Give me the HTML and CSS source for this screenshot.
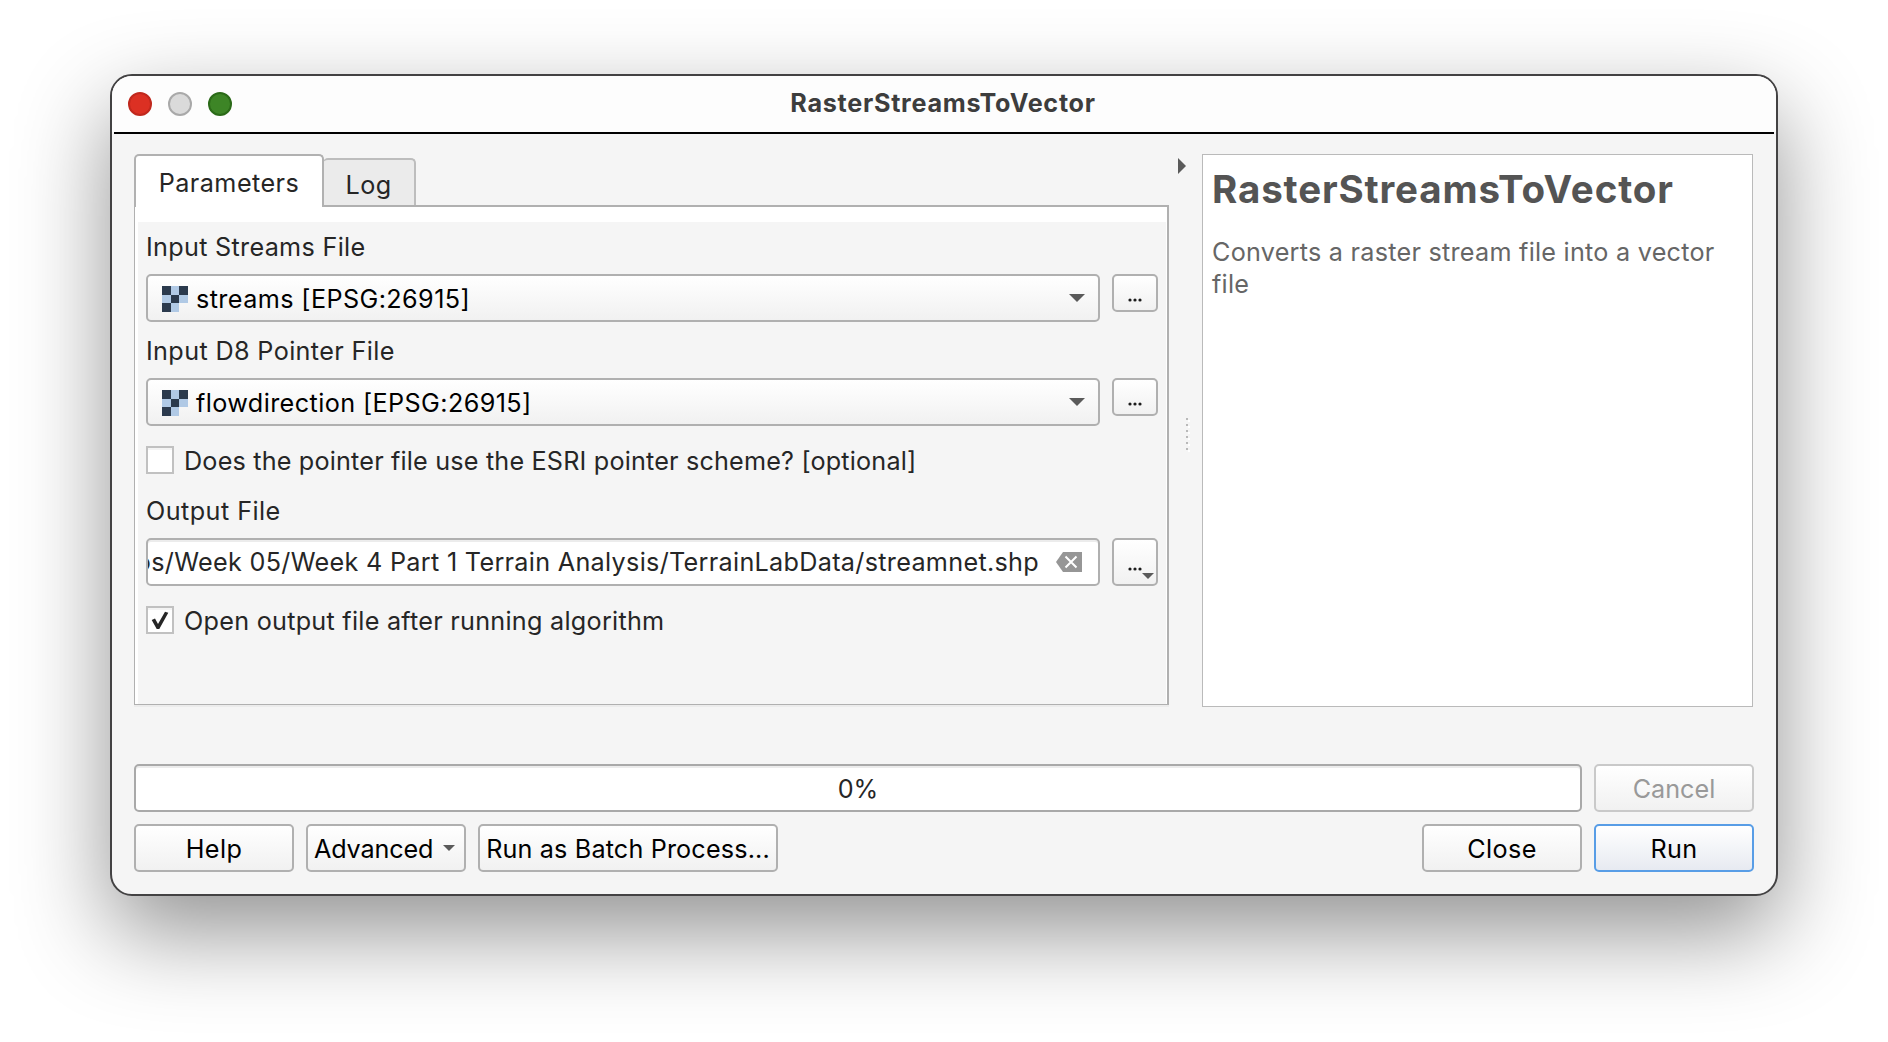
FILE: index.html
```
<!DOCTYPE html>
<html lang="en">
<head>
<meta charset="utf-8">
<title>RasterStreamsToVector</title>
<link rel="stylesheet" href="styles.css">
</head>
<body>
<div class="window">
  <header class="titlebar">
    <div class="lights"><i class="light light-close"></i><i class="light light-min"></i><i class="light light-max"></i></div>
    <h1 class="window-title">RasterStreamsToVector</h1>
  </header>
  <div class="divider"></div>

  <main class="content">
    <section class="left">
      <nav class="tabs">
        <div class="tab tab-active">Parameters</div>
        <div class="tab tab-log">Log</div>
      </nav>
      <div class="pane">
        <div class="form">
          <label class="label ls-30">Input Streams File</label>
          <div class="row">
            <div class="combo">
              <svg class="raster" viewBox="0 0 3 3" shape-rendering="crispEdges"><path fill="#b0c9e5" d="M0 0h3v2H2v1H0z"/><path fill="#2b3a4d" d="M0 0h1v1H0zM2 0h1v1H2zM1 1h1v1H1zM0 2h1v1H0z"/></svg>
              <span class="combo-text">streams [EPSG:26915]</span>
              <svg class="arrow" viewBox="0 0 16 8"><path d="M0 0h16L8 8z"/></svg>
            </div>
            <div class="more">
              <svg class="dots" viewBox="0 0 14 4"><circle cx="2" cy="2" r="1.6"/><circle cx="7" cy="2" r="1.6"/><circle cx="12" cy="2" r="1.6"/></svg>
            </div>
          </div>
          <label class="label label-second">Input D8 Pointer File</label>
          <div class="row">
            <div class="combo">
              <svg class="raster" viewBox="0 0 3 3" shape-rendering="crispEdges"><path fill="#b0c9e5" d="M0 0h3v2H2v1H0z"/><path fill="#2b3a4d" d="M0 0h1v1H0zM2 0h1v1H2zM1 1h1v1H1zM0 2h1v1H0z"/></svg>
              <span class="combo-text">flowdirection [EPSG:26915]</span>
              <svg class="arrow" viewBox="0 0 16 8"><path d="M0 0h16L8 8z"/></svg>
            </div>
            <div class="more">
              <svg class="dots" viewBox="0 0 14 4"><circle cx="2" cy="2" r="1.6"/><circle cx="7" cy="2" r="1.6"/><circle cx="12" cy="2" r="1.6"/></svg>
            </div>
          </div>
          <div class="check-row">
            <span class="checkbox"></span>
            <span class="check-text ls-18">Does the pointer file use the ESRI pointer scheme? [optional]</span>
          </div>
          <label class="label label-output">Output File</label>
          <div class="row">
            <div class="path-field">
              <div class="path-clip"><span class="path">os/Week 05/Week 4 Part 1 Terrain Analysis/TerrainLabData/streamnet.shp</span></div>
              <svg class="clear" viewBox="0 0 26 20"><path fill="#969696" d="M0 10 7 0h19v20H7z"/><path d="M9.5 4.500l11 11M20.500 4.500l-11 11" stroke="#fff" stroke-width="2" fill="none"/></svg>
            </div>
            <div class="more more-menu">
              <svg class="dots" viewBox="0 0 14 4"><circle cx="2" cy="2" r="1.6"/><circle cx="7" cy="2" r="1.6"/><circle cx="12" cy="2" r="1.6"/></svg>
              <svg class="menu-arrow" viewBox="0 0 12 6"><path d="M0 0h12L6 6z"/></svg>
            </div>
          </div>
          <div class="check-row">
            <span class="checkbox"><svg class="tick" viewBox="0 0 24 24"><path fill="#262626" d="M3.700 12 7 10.500l3 5.500L17 3.700l3.300 1L11.300 21H8.700z"/></svg></span>
            <span class="check-text ls-26">Open output file after running algorithm</span>
          </div>
        </div>
      </div>
    </section>

    <div class="splitter">
      <svg class="collapse" viewBox="0 0 8 16"><path d="M0 0 8 8 0 16z"/></svg>
      <svg class="grip" viewBox="0 0 4 34" shape-rendering="crispEdges"><path fill="#fff" d="M2 2h2v2H2zM2 8h2v2H2zM2 14h2v2H2zM2 20h2v2H2zM2 26h2v2H2zM2 32h2v2H2z"/><path fill="#b9b9b9" d="M0 0h2v2H0zM0 6h2v2H0zM0 12h2v2H0zM0 18h2v2H0zM0 24h2v2H0zM0 30h2v2H0z"/></svg>
    </div>

    <aside class="help-panel">
      <h2 class="help-title">RasterStreamsToVector</h2>
      <p class="help-text">Converts a raster stream file into a vector file</p>
    </aside>
  </main>

  <footer class="footer">
    <div class="footer-row">
      <div class="progress">0%</div>
      <button class="btn btn-cancel" disabled>Cancel</button>
    </div>
    <div class="footer-row">
      <button class="btn btn-help">Help</button>
      <button class="btn btn-advanced">Advanced<svg class="btn-arrow" viewBox="0 0 12 6"><path d="M0 0h12L6 6z"/></svg></button>
      <button class="btn btn-batch">Run as Batch Process...</button>
      <span class="spacer"></span>
      <button class="btn btn-close">Close</button>
      <button class="btn btn-run">Run</button>
    </div>
  </footer>
</div>
</body>
</html>
```
FILE: styles.css
```
* { box-sizing: border-box; }

body {
  margin: 0;
  padding: 74px 110px 0;
  height: 1042px;
  overflow: hidden;
  background: #fff;
  font-family: Inter, "Liberation Sans", sans-serif;
  font-size: 25.2px;
  line-height: 32px;
  color: #262626;
}

svg { display: block; flex: none; }

.window {
  width: 1668px;
  height: 822px;
  border: 2px solid #434243;
  border-radius: 22px;
  background: #f5f5f5;
  box-shadow: 0 36px 92px rgba(0, 0, 0, .43);
  overflow: hidden;
  display: flex;
  flex-direction: column;
}

.titlebar {
  flex: none;
  height: 56px;
  display: grid;
  grid-template-columns: 1fr auto 1fr;
  align-items: center;
  padding: 0 16px;
  background: #fdfdfd;
}
.lights { display: flex; gap: 16px; }
.light { width: 24px; height: 24px; border-radius: 50%; border: 2px solid; }
.light-close { background: #dc3023; border-color: #c0281d; }
.light-min { background: #dadada; border-color: #a9a9a9; }
.light-max { background: #3d8526; border-color: #2b6a18; }
.window-title { margin: 0 2px 2px 0; font-size: 25.2px; font-weight: 700; letter-spacing: .72px; color: #3d3d3d; }
.divider { flex: none; height: 2px; margin: 0 2px; background: #000; }

.content { flex: none; display: flex; height: 573px; padding: 20px 23px 0 22px; }
.left { width: 1035px; height: 551px; display: flex; flex-direction: column; }

.tabs { display: flex; align-items: flex-end; height: 51px; }
.tab { border: 2px solid #b1b1b1; border-bottom: 0; border-radius: 5px 5px 0 0; text-align: center; }
.tab-active {
  position: relative;
  z-index: 1;
  width: 190px;
  height: 53px;
  margin-bottom: -2px;
  padding-top: 11px;
  background: #fff;
  letter-spacing: .45px;
}
.tab-log {
  width: 93px;
  height: 47px;
  margin-left: -1px;
  padding-top: 9px;
  border-left-width: 0;
  border-color: #bdbdbd;
  background: #ebebeb;
  letter-spacing: .4px;
}

.pane {
  flex: 1;
  padding: 15px 1px 0 3px;
  border: solid #b0b0b0;
  border-width: 2px 2px 1px 1px;
  background: #fff;
  box-shadow: 0 2px 0 #ececec;
}
.form { height: 100%; padding: 9px 8px 0; background: #f5f5f5; }

.label { display: block; height: 32px; margin-bottom: 11px; letter-spacing: .36px; }
.ls-30 { letter-spacing: .3px; }
.ls-18 { letter-spacing: .18px; }
.ls-26 { letter-spacing: .26px; }
.label-second { margin-top: 13px; }
.label-output { margin-top: 21px; margin-bottom: 11px; letter-spacing: .45px; }

.row { display: flex; align-items: flex-start; gap: 12px; }

.combo, .more, .btn {
  border: 2px solid #b0b0b0;
  border-radius: 5px;
  background: linear-gradient(#fff, #f1f1f1);
}
.combo {
  flex: none;
  width: 954px;
  height: 48px;
  display: flex;
  align-items: center;
  padding: 0 13px 0 14px;
  color: #000;
  letter-spacing: .4px;
}
.raster { width: 26px; height: 26px; margin: 2px 8px 0 0; }
.combo-text { flex: 1; padding-top: 2px; }
.arrow { width: 16px; height: 8px; fill: #5a5a5a; }

.more { flex: none; width: 46px; height: 38px; padding: 21.500px 0 0 13.500px; }
.dots { width: 14px; height: 4px; fill: #1c1c1c; }
.more-menu { height: 48px; padding-top: 26.500px; }
.menu-arrow { width: 12px; height: 6px; margin: 2.500px 0 0 14.500px; fill: #5a5a5a; }

.check-row { display: flex; align-items: center; height: 28px; margin-top: 20px; }
.checkbox { width: 28px; height: 28px; border: 2px solid #c1c1c1; background: #fff; box-shadow: inset 0 2px 0 #f4f4f4; }
.tick { width: 24px; height: 24px; }
.check-text { margin-left: 10px; padding-top: 2px; }

.path-field {
  flex: none;
  width: 954px;
  height: 48px;
  display: flex;
  align-items: center;
  padding-right: 16px;
  border: 2px solid #b0b0b0;
  border-radius: 5px;
  background: #fff;
  box-shadow: inset 0 2px 0 #ececec;
}
.path-clip { width: 891px; overflow: hidden; display: flex; justify-content: flex-end; }
.path { white-space: nowrap; letter-spacing: .3px; }
.clear { width: 26px; height: 20px; margin-left: auto; }

.splitter { flex: none; width: 33px; padding: 4px 0 0 9px; }
.collapse { width: 8px; height: 16px; fill: #5a5a5a; }
.grip { width: 4px; height: 34px; margin: 244px 0 0 8px; }

.help-panel { width: 551px; height: 553px; padding: 12px 8px 0 9px; border: 1px solid #bababa; background: #fff; }
.help-title { margin: 0; height: 44px; line-height: 44px; font-size: 38.500px; font-weight: 700; letter-spacing: .85px; color: #545454; }
.help-text { margin: 25px 0 0; letter-spacing: .25px; color: #666; }

.footer { display: flex; flex-direction: column; gap: 12px; padding: 57px 22px 0; }
.footer-row { display: flex; gap: 12px; }
.progress {
  width: 1448px;
  height: 48px;
  padding-top: 7px;
  border: 2px solid #a9a9a9;
  border-radius: 5px;
  background: #fff;
  box-shadow: inset 0 2px 0 #ececec;
  text-align: center;
}
.btn {
  width: 160px;
  height: 48px;
  padding: 2px 0 0;
  font: inherit;
  color: #000;
  letter-spacing: .4px;
  white-space: nowrap;
}
.btn-cancel { border-color: #c9c9c9; color: #999; letter-spacing: 0; }
.btn-advanced { display: flex; align-items: center; padding-left: 6px; letter-spacing: -.15px; }
.btn-arrow { width: 12px; height: 6px; margin: 0 0 2px 10px; fill: #5a5a5a; }
.btn-batch { width: 300px; letter-spacing: .15px; }
.spacer { flex: 1; }
.btn-run { border-color: #589de6; background: linear-gradient(#fff, #e7eaf1); }
```
